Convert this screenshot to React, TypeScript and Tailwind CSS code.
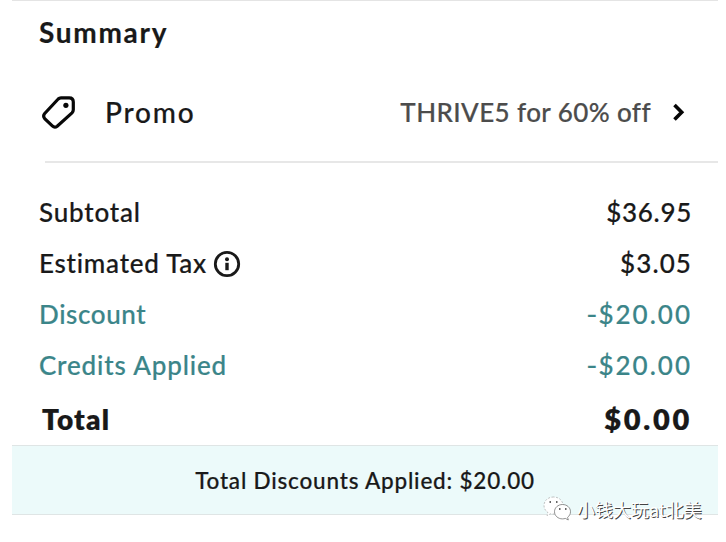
import React from "react";

type LineProps = {
  label: string;
  amount: string;
  labelClass: string;
  amountClass: string;
  info?: boolean;
};

function InfoIcon() {
  return (
    <svg className="ml-[6px] h-7 w-7" viewBox="0 0 28 28" fill="none">
      <circle cx="14" cy="14" r="11.7" stroke="#191919" strokeWidth="2.8" />
      <circle cx="14" cy="9.3" r="2" fill="#191919" />
      <path d="M14 12.8v7.4" stroke="#191919" strokeWidth="3.4" />
    </svg>
  );
}

function Line({ label, amount, labelClass, amountClass, info }: LineProps) {
  const negative = amount.startsWith("-");
  return (
    <div className="flex h-[51px] items-center justify-between text-[26px] font-medium">
      <div className="flex items-center">
        <span className={labelClass}>{label}</span>
        {info && <InfoIcon />}
      </div>
      <span className={amountClass}>
        {negative && <span className="-mr-px inline-block origin-right scale-x-115">-</span>}
        {negative ? amount.slice(1) : amount}
      </span>
    </div>
  );
}

export default function App() {
  return (
    <div className="h-[542px] w-[726px] overflow-hidden bg-white pl-3 pr-2 font-['Lato','Liberation_Sans',sans-serif] whitespace-nowrap text-[#191919] [-webkit-text-stroke:0.2px]">
      <div className="h-[542px] w-[706px] border-t border-[#e4e4e4]">
        <h1 className="ml-[27px] mt-[10px] h-[42px] text-[28px] leading-[42px] font-bold">
          <span className="tracking-[1.7px]">Summary</span>
        </h1>
        <div className="ml-[33px] flex h-[110px] items-center border-b-2 border-[#e7e7e7] pt-[10px]">
          <svg className="-mt-[3px] -ml-[6px] h-9 w-9" viewBox="0 0 36 36" fill="none">
            <path
              d="M22 4.800H30.200Q34.300 4.800 34.300 8.900V16.800Q34.300 18.600 33 19.900L18.200 33.200Q15.700 35.200 13.300 32.900L5.700 25.600Q3.600 23 5.700 20.500L19.200 6Q20.400 4.800 22 4.800Z"
              stroke="#080808"
              strokeWidth="3.2"
            />
            <circle cx="26.900" cy="12.300" r="2.600" fill="#080808" />
          </svg>
          <span className="ml-[30px] text-[28px] font-medium tracking-[1.8px]">Promo</span>
          <div className="mr-[28px] ml-auto flex items-center">
            <span className="-mr-px text-[26px] font-medium tracking-[0.4px] text-[#4c4c4c]">THRIVE5 for 60% off</span>
            <svg className="ml-5 h-5 w-5" viewBox="0 0 20 20" fill="none">
              <path d="M4.500 3L11.700 10.200L4.500 17.400" stroke="#050505" strokeWidth="3.6" />
            </svg>
          </div>
        </div>
        <div className="mt-[24px] mr-[27px] ml-[27px]">
          <Line label="Subtotal" amount="$36.95" labelClass="tracking-[0.8px]" amountClass="tracking-[0.7px] -mr-px" />
          <Line label="Estimated Tax" amount="$3.05" labelClass="tracking-[0.75px]" amountClass="tracking-[1.1px] -mr-px" info />
          <Line label="Discount" amount="-$20.00" labelClass="tracking-[0.6px] text-[#3b8589]" amountClass="tracking-[2px] -mr-px text-[#3b8589]" />
          <Line label="Credits Applied" amount="-$20.00" labelClass="tracking-[0.85px] text-[#3b8589]" amountClass="tracking-[2px] -mr-px text-[#3b8589]" />
          <div className="flex h-[55px] items-center justify-between pl-[3px] text-[28px] font-extrabold">
            <span className="tracking-[1.2px]">Total</span>
            <span className="-mr-px text-[29px] tracking-[2.7px]">$0.00</span>
          </div>
        </div>
        <footer className="relative -mt-px flex h-[70px] items-center justify-center border-y border-[#dfe5e5] bg-[#ecfafa] pt-px text-[22.5px] font-medium">
          <span className="tracking-[0.8px]">Total Discounts Applied: $20.00</span>
          <div className="absolute top-[49px] left-[531px] flex items-center [-webkit-text-stroke:0px]">
            <svg className="h-7 w-7" viewBox="0 0 28 28">
              <path d="M10.500 2C5 2 1 5.800 1 10.500c0 3 1.500 5.300 3.800 6.900L4 20.500l3.800-1.800c5.500 1.500 12.200-2 12.200-8.200C20 5.800 16 2 10.500 2Z" fill="#fff" stroke="#999" strokeWidth=".6" strokeDasharray="2 1.500" />
              <path d="M19.500 9.500c-4.500 0-8 3.200-8 7.200s3.500 7.200 8 7.200c1 0 2-.2 2.800-.5l3 1.600-.7-2.700c1.800-1.400 2.900-3.300 2.900-5.600 0-4-3.500-7.200-8-7.200Z" fill="#fff" stroke="#666" strokeWidth=".7" />
              <path d="M6.500 7h1.500M13 7h1.500M16 14h1.500M22 14h1.500" stroke="#333" strokeWidth="1.300" />
            </svg>
            <span className="ml-[6px] font-['Noto_Sans_CJK_SC',sans-serif] text-[18px] leading-[28px] font-normal text-white [text-shadow:1px_1px_0_#444]">小钱大玩at北美</span>
          </div>
        </footer>
      </div>
    </div>
  );
}
